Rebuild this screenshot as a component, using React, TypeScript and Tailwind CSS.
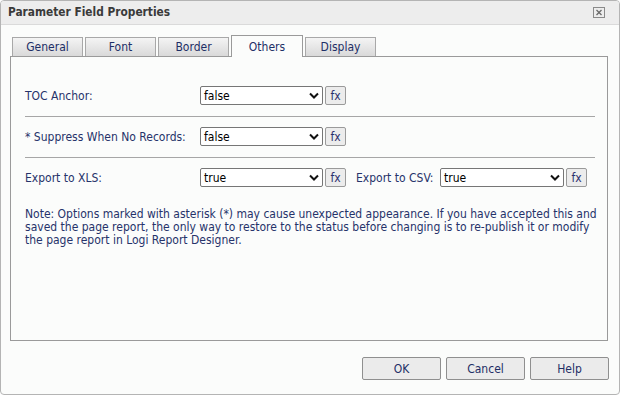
import React from 'react';

const font = { fontFamily: '"DejaVu Sans Condensed", "Liberation Sans", sans-serif' };

function Chevron() {
  return (
    <svg width="10" height="7" viewBox="0 0 10 7" className="shrink-0">
      <path d="M1 1.5 L5 5.5 L9 1.5" fill="none" stroke="#111" strokeWidth="2" />
    </svg>
  );
}

function Select({ value, width }: { value: string; width: string }) {
  return (
    <div
      className={`${width} h-[19px] flex items-center justify-between bg-white border border-[#767676] rounded-[2px] pl-[3px] pr-[3px] text-[12px] text-black`}
    >
      <span>{value}</span>
      <Chevron />
    </div>
  );
}

function Fx() {
  return (
    <div className="w-[21px] h-[19px] ml-[2px] flex items-center justify-center bg-[#ececec] border border-[#9a9a9a] rounded-[2px] text-[12px] text-[#2b2f6e]">
      fx
    </div>
  );
}

function Tab({ label, active }: { label: string; active?: boolean }) {
  if (active) {
    return (
      <div className="w-[72px] h-[22px] -mb-px flex items-center justify-center bg-[#fbfcfb] border border-b-0 border-[#9a9a9a] text-[12px] text-[#1e2f66] relative z-10">
        {label}
      </div>
    );
  }
  return (
    <div className="w-[71px] h-[19px] flex items-center justify-center bg-gradient-to-b from-[#f4f4f4] to-[#d9d9d9] border border-b-0 border-[#a8a8a8] text-[12px] text-[#1e2f66]">
      {label}
    </div>
  );
}

function Row({ label, value, children }: { label: string; value: string; children?: React.ReactNode }) {
  return (
    <div className="flex items-center h-[19px]">
      <div className="w-[175px] text-[12px] text-[#26336a]">{label}</div>
      <Select value={value} width="w-[123px]" />
      <Fx />
      {children}
    </div>
  );
}

export default function App() {
  return (
    <div className="w-[620px] h-[395px] bg-white" style={font}>
      <div className="w-[620px] h-[395px] flex flex-col bg-[#fbfcfb] border border-[#b4b4b4] rounded-[4px] overflow-hidden">
        <div className="h-[24px] shrink-0 flex items-center justify-between pl-[7px] pr-[14px] bg-[#ededed] border-b border-[#dadada]">
          <span className="text-[11.8px] font-bold text-[#3a3a3a]">Parameter Field Properties</span>
          <svg width="12" height="11" viewBox="0 0 12 11">
            <rect x="0.5" y="0.5" width="11" height="10" fill="none" stroke="#8a8a8a" />
            <path d="M3.5 3 L8.5 8 M8.5 3 L3.5 8" stroke="#6a6a6a" strokeWidth="1.3" />
          </svg>
        </div>

        <div className="pl-[9px] pr-[11px] pt-[10px]">
          <div className="flex items-end gap-[2px] pl-[2px]">
            <Tab label="General" />
            <Tab label="Font" />
            <Tab label="Border" />
            <Tab label="Others" active />
            <Tab label="Display" />
          </div>

          <div className="h-[285px] border border-[#9a9a9a] pl-[14px] pr-[12px] pt-[29px]">
            <Row label="TOC Anchor:" value="false" />
            <div className="mt-[11px] border-t border-[#a6a6a6]" />
            <div className="mt-[10px]">
              <Row label="* Suppress When No Records:" value="false" />
            </div>
            <div className="mt-[11px] border-t border-[#a6a6a6]" />
            <div className="mt-[10px]">
              <Row label="Export to XLS:" value="true">
                <div className="ml-[10px] w-[84px] text-[12px] text-[#26336a]">Export to CSV:</div>
                <Select value="true" width="w-[124px]" />
                <Fx />
              </Row>
            </div>
            <p className="mt-[21px] text-[12px] leading-[13px] text-[#26336a] whitespace-nowrap">
              Note: Options marked with asterisk (*) may cause unexpected appearance. If you have accepted this and
              <br />
              saved the page report, the only way to restore to the status before changing is to re-publish it or modify
              <br />
              the page report in Logi Report Designer.
            </p>
          </div>

          <div className="flex justify-end gap-[5px] mt-[16px] -mr-[1px]">
            {['OK', 'Cancel', 'Help'].map((b) => (
              <div
                key={b}
                className="w-[79px] h-[23px] flex items-center justify-center bg-[#ebebeb] border border-[#8f8f8f] rounded-[2px] text-[12px] text-[#1e2f66]"
              >
                {b}
              </div>
            ))}
          </div>
        </div>
      </div>
    </div>
  );
}
